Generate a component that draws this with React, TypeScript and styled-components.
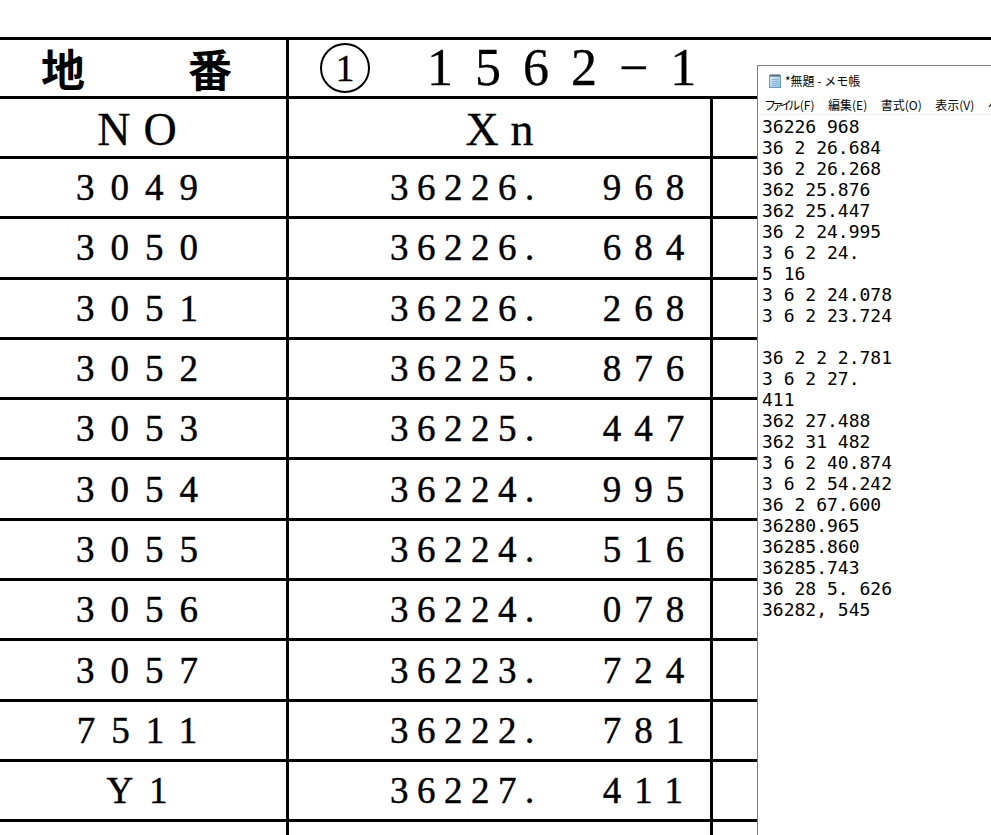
import React from 'react';
import styled, { createGlobalStyle } from 'styled-components';

const GlobalStyle = createGlobalStyle`
  html, body { margin: 0; padding: 0; background: #fff; overflow: hidden; }
  #root { width: 991px; height: 835px; }
`;

const Page = styled.div`
  position: relative;
  width: 991px;
  height: 835px;
  overflow: hidden;
  background: #fff;
  padding-top: 37px;
  box-sizing: border-box;
  font-family: "Liberation Serif", "Times New Roman", serif;
  color: #000;
`;

const Ledger = styled.div`
  display: grid;
  grid-template-columns: 286px 421px 1fr;
  grid-template-rows: 56px 57px repeat(11, 57.3px) 60px;
  gap: 3px;
  padding-top: 3px;
  background: #000;
`;

const Cell = styled.div`
  background: #fff;
  display: flex;
  align-items: center;
  min-width: 0;
  line-height: 1;
  -webkit-text-stroke: 0.45px #000;
`;

const LotLabel = styled(Cell)`
  justify-content: space-between;
  padding: 0 54px 0 41px;
  font-family: "Noto Sans CJK JP", sans-serif;
  font-weight: 700;
  font-size: 44px;
  -webkit-text-stroke: 0;
`;

const LotValue = styled(Cell)`
  grid-column: 2 / -1;
  padding-left: 31px;
  -webkit-text-stroke: 0.3px #000;
`;

const CircledMark = styled.span`
  width: 50px;
  height: 50px;
  box-sizing: border-box;
  border: 2.5px solid #000;
  border-radius: 50%;
  display: flex;
  align-items: center;
  justify-content: center;
  font-size: 38px;
  line-height: 1;
`;

const LotNumber = styled.span`
  margin-left: 57px;
  font-size: 52px;
  letter-spacing: 22px;
`;

const ColHead = styled(Cell)<{ $pad?: number }>`
  justify-content: center;
  padding-top: 4px;
  padding-right: ${(p) => p.$pad ?? 0}px;
  font-size: 46px;
  -webkit-text-stroke: 0.3px #000;
`;

const Spaced = styled.span<{ $ls: number }>`
  letter-spacing: ${(p) => p.$ls}px;
  margin-right: -${(p) => p.$ls}px;
`;

const NoCell = styled(Cell)`
  justify-content: center;
  padding-right: 12px;
  font-size: 37px;
`;

const XnCell = styled(Cell)`
  padding-left: 101px;
  font-size: 37px;
`;

const XnInt = styled.span`
  letter-spacing: 8.5px;
`;

const XnFrac = styled.span`
  margin-left: 60px;
  letter-spacing: 13px;
`;

const Blank = styled(Cell)``;

const Notepad = styled.div`
  position: absolute;
  left: 757px;
  top: 65px;
  width: 260px;
  bottom: -4px;
  background: #fff;
  border: 1px solid #7f7f7f;
  display: flex;
  flex-direction: column;
`;

const TitleBar = styled.div`
  height: 29px;
  display: flex;
  align-items: center;
  gap: 3px;
  padding-left: 10px;
  font-family: "Noto Sans CJK JP", sans-serif;
  font-size: 12px;
  color: #000;
  white-space: nowrap;
`;

const MenuBar = styled.div`
  height: 19px;
  display: flex;
  align-items: center;
  gap: 13.5px;
  padding-left: 7px;
  font-family: "Noto Sans CJK JP", sans-serif;
  font-size: 12px;
  font-feature-settings: "palt";
  color: #000;
  white-space: nowrap;
  overflow: hidden;
  border-bottom: 1px solid #f0f0f0;
`;

const MenuItem = styled.span`
  flex: none;
`;

const Kana = styled.span`
  letter-spacing: -2.2px;
  margin-right: 2px;
`;

const Editor = styled.div`
  padding: 1px 0 0 4px;
  font-family: "DejaVu Sans Mono", "Liberation Mono", monospace;
  font-size: 18px;
  line-height: 21px;
  white-space: pre;
  color: #000;
`;

const NotepadIcon = () => (
  <svg width="14" height="15" viewBox="0 0 14 15" aria-hidden>
    <defs>
      <linearGradient id="npg" x1="0" y1="0" x2="1" y2="1">
        <stop offset="0" stopColor="#e4f4fc" />
        <stop offset="1" stopColor="#86bde0" />
      </linearGradient>
    </defs>
    <rect x="1.5" y="2.5" width="11" height="12" fill="url(#npg)" stroke="#6a9cc0" />
    <path d="M3.5 6.5h7M3.5 8.5h7M3.5 10.5h7M3.5 12.5h5" stroke="#8fb6d2" strokeWidth="1" />
    <path d="M3 1v3M5 1v3M7 1v3M9 1v3M11 1v3" stroke="#4a4a4a" strokeWidth="1" />
  </svg>
);

const rows: [string, string, string][] = [
  ['3049', '36226.', '968'],
  ['3050', '36226.', '684'],
  ['3051', '36226.', '268'],
  ['3052', '36225.', '876'],
  ['3053', '36225.', '447'],
  ['3054', '36224.', '995'],
  ['3055', '36224.', '516'],
  ['3056', '36224.', '078'],
  ['3057', '36223.', '724'],
  ['7511', '36222.', '781'],
  ['Y1', '36227.', '411'],
];

const memo = [
  '36226 968',
  '36 2 26.684',
  '36 2 26.268',
  '362 25.876',
  '362 25.447',
  '36 2 24.995',
  '3 6 2 24.',
  '5 16',
  '3 6 2 24.078',
  '3 6 2 23.724',
  '',
  '36 2 2 2.781',
  '3 6 2 27.',
  '411',
  '362 27.488',
  '362 31 482',
  '3 6 2 40.874',
  '3 6 2 54.242',
  '36 2 67.600',
  '36280.965',
  '36285.860',
  '36285.743',
  '36 28 5. 626',
  '36282, 545',
].join('\n');

export default function App() {
  return (
    <>
      <GlobalStyle />
      <Page>
        <Ledger>
          <LotLabel>
            <span>地</span>
            <span>番</span>
          </LotLabel>
          <LotValue>
            <CircledMark>1</CircledMark>
            <LotNumber>1562−1</LotNumber>
          </LotValue>

          <ColHead $pad={12}>
            <Spaced $ls={13}>NO</Spaced>
          </ColHead>
          <ColHead>
            <Spaced $ls={12}>Xn</Spaced>
          </ColHead>
          <Blank />

          {rows.map(([no, int, frac]) => (
            <React.Fragment key={no}>
              <NoCell>
                <Spaced $ls={16}>{no}</Spaced>
              </NoCell>
              <XnCell>
                <XnInt>{int}</XnInt>
                <XnFrac>{frac}</XnFrac>
              </XnCell>
              <Blank />
            </React.Fragment>
          ))}

          <Blank />
          <Blank />
          <Blank />
        </Ledger>

        <Notepad>
          <TitleBar>
            <NotepadIcon />
            <span>*無題 - メモ帳</span>
          </TitleBar>
          <MenuBar>
            <MenuItem>
              <Kana>ファイル</Kana>(F)
            </MenuItem>
            <MenuItem>編集(E)</MenuItem>
            <MenuItem>書式(O)</MenuItem>
            <MenuItem>表示(V)</MenuItem>
            <MenuItem>ヘルプ(H)</MenuItem>
          </MenuBar>
          <Editor>{memo}</Editor>
        </Notepad>
      </Page>
    </>
  );
}
